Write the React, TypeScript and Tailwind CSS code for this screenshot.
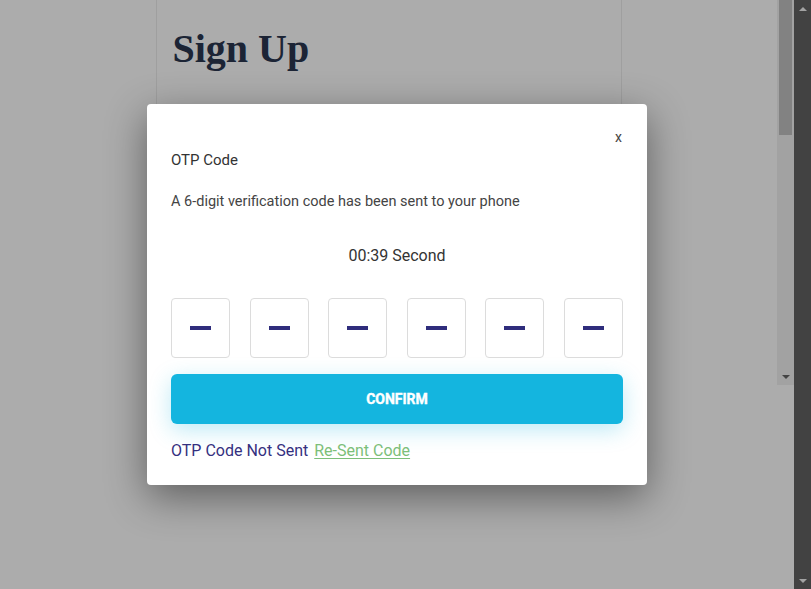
import React from "react";

export default function App() {
  const boxes = [0, 1, 2, 3, 4, 5];
  return (
    <div className="flex h-[589px] w-full overflow-hidden bg-white" style={{ fontFamily: "Roboto, 'Liberation Sans', sans-serif" }}>
      {/* main viewport */}
      <div className="relative flex-1 h-full">
        {/* underlying page */}
        <div className="flex h-[385px]">
          <div className="flex-1 flex justify-center">
            <div className="w-[466px] h-full border-x border-[#ececec] bg-white px-[16px] pt-[24px]">
              <h1
                className="text-[40px] font-bold leading-[50px] text-[#2a364f]"
                style={{ fontFamily: "'Liberation Serif', 'Times New Roman', serif" }}
              >
                Sign Up
              </h1>
            </div>
          </div>
          {/* inner scrollbar */}
          <div className="flex w-[17px] flex-col bg-[#f1f1f1]">
            <div className="mx-[2px] h-[135px] bg-[#c1c1c1]" />
            <div className="flex-1" />
            <div className="flex h-[17px] items-center justify-center">
              <div className="h-0 w-0 border-x-[4px] border-t-[4px] border-x-transparent border-t-[#666]" />
            </div>
          </div>
        </div>

        {/* overlay */}
        <div className="absolute inset-0 flex items-center justify-center bg-[rgba(0,0,0,0.325)]">
          <div className="w-[500px] rounded-[4px] bg-white px-[24px] pt-[23px] pb-[22px] shadow-[0_12px_40px_rgba(0,0,0,0.45)]">
            <div className="flex h-[20px] justify-end text-[14px] leading-[20px] text-[#444]">
              <span className="pr-[1px]">x</span>
            </div>
            <div className="mt-[3px] text-[15px] leading-[20px] text-[#333]">OTP Code</div>
            <div className="mt-[22px] text-[14.5px] leading-[20px] text-[#444]">
              A 6-digit verification code has been sent to your phone
            </div>
            <div className="mt-[32px] text-center text-[16px] leading-[24px] text-[#333]">00:39 Second</div>
            <div className="mt-[30px] flex justify-between">
              {boxes.map((i) => (
                <div
                  key={i}
                  className="flex h-[60px] w-[59px] items-center justify-center rounded-[4px] border border-[#dcdcdc]"
                >
                  <div className="h-[4px] w-[21px] bg-[#2f2d7c]" />
                </div>
              ))}
            </div>
            <button className="mt-[16px] flex h-[50px] w-full items-center justify-center rounded-[6px] bg-[#14b5df] text-[14px] font-bold text-white [-webkit-text-stroke:0.4px_white] shadow-[0_6px_22px_rgba(20,181,223,0.28)]">
              CONFIRM
            </button>
            <div className="mt-[15px] flex items-center gap-[6px] text-[16px] leading-[24px]">
              <span className="text-[#34307f]">OTP Code Not Sent</span>
              <span className="text-[#7cbf79] underline underline-offset-[2px]">Re-Sent Code</span>
            </div>
          </div>
        </div>
      </div>

      {/* page scrollbar */}
      <div className="flex h-full w-[17px] flex-col justify-between bg-[#424242]">
        <div className="flex h-[17px] items-center justify-center">
          <div className="h-0 w-0 border-x-[4px] border-b-[4px] border-x-transparent border-b-[#a3a3a3]" />
        </div>
        <div className="flex h-[17px] items-center justify-center">
          <div className="h-0 w-0 border-x-[4px] border-t-[4px] border-x-transparent border-t-[#a3a3a3]" />
        </div>
      </div>
    </div>
  );
}
